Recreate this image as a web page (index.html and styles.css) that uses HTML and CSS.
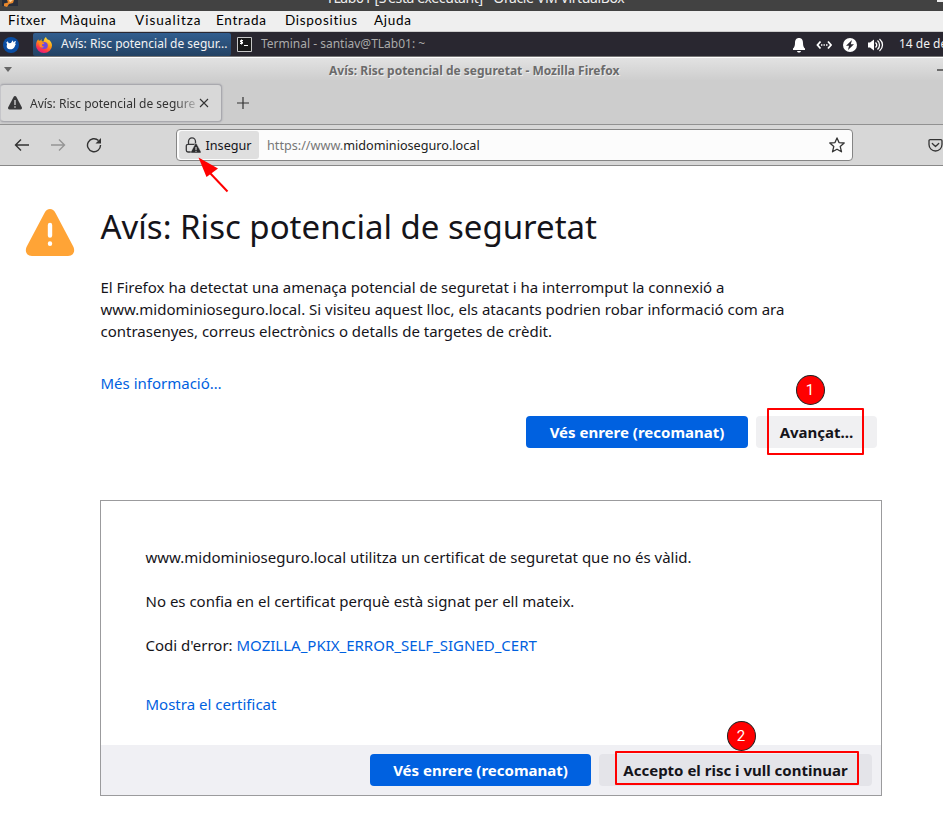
FILE: index.html
```html
<!DOCTYPE html>
<html lang="ca">
<head>
<meta charset="utf-8">
<title>Avís: Risc potencial de seguretat</title>
<link rel="stylesheet" href="styles.css">
</head>
<body>
<header class="host-title">
  <svg class="host-icon" width="24" height="9" viewBox="0 0 24 9"><path fill="#292e3a" d="M2 0h16v6H2z"/><path fill="#e9882c" d="M7 0h7l-1 3-4 1-2 3-3-1V3.500l4-1z"/><path fill="#ffd39a" d="M9 0h4l-3 2.500z"/></svg>
  <span>TLab01 [S'està executant] - Oracle VM VirtualBox</span>
  <i class="host-min"></i>
</header>
<nav class="host-menu"><span>Fitxer</span><span>Màquina</span><span>Visualitza</span><span>Entrada</span><span>Dispositius</span><span>Ajuda</span></nav>

<div class="panel">
  <svg class="whisker" width="16" height="16" viewBox="0 0 16 16"><circle cx="8" cy="8" r="8" fill="#0a4da2"/><path fill="#fff" d="M2.500 4.500l1.500 1.300L4.500 4l1.300 2.200L8 6l1.500-2.500.8.400-.3 1.600L12.300 4l.7.700-1.300 1.800 1.300.2c-.7 1-.9 2-1.500 3.200-.9 1.700-2.500 2.600-4.700 2.400-2-.2-3.300-1.500-3.100-3.300.1-.9.500-1.500.2-2.300z"/></svg>
  <div class="task active">
    <svg width="16" height="16" viewBox="0 0 16 16">
      <defs><linearGradient id="fox" x1=".8" y1="0" x2=".3" y2="1"><stop offset="0" stop-color="#fff04a"/><stop offset=".45" stop-color="#ff980e"/><stop offset=".75" stop-color="#ff3b47"/><stop offset="1" stop-color="#e31587"/></linearGradient></defs>
      <path fill="url(#fox)" d="M2.300 2.200l.5 1.500 1.700-.1L5.600 2v2.200l2 .3C8 2.600 8.600.9 10 0c.2 1.600 1.500 2.300 2.400 3.300L12.700 2.500C15 4.500 16 6.500 16 8.500a8 7.500 0 0 1-16 0C0 5.700.9 3.600 2.300 2.200z"/><circle cx="8.300" cy="8.500" r="3.500" fill="#7048de"/><path fill="#ff8b22" d="M3 6l3-.8 2.500.8-.8 1-1.700.3.200 1.700 2 .8-2 .9-2.400-1z"/></svg>
    <span>Avís: Risc potencial de segur...</span>
  </div>
  <div class="task terminal">
    <svg width="15" height="15" viewBox="0 0 15 15"><path fill="#171717" stroke="#c7c7c7" d="M.5.5h14v14H.500z"/><path fill="none" stroke="#fff" d="M6 3.500H3.500v1.500H5.500V6.500H3M4.500 2.500v5M7 8.500h4"/></svg>
    <span>Terminal - santiav@TLab01: ~</span>
  </div>
  <div class="tray">
    <svg width="14" height="16" viewBox="0 0 14 16"><path fill="#fff" d="M7 1c3 0 4 2.200 4 5 0 3.300.8 4.500 2 5.500v1.500H1v-1.500c1.200-1 2-2.200 2-5.500 0-2.800 1-5 4-5zM5 14h4c-.3 1-1 1.500-2 1.500S5.300 15 5 14z"/></svg>
    <svg width="16" height="16" viewBox="0 0 16 16"><path fill="none" stroke="#fff" stroke-width="1.800" d="M4.500 4.500L1.500 8l3 3.500M12 4.500L15 8l-3 3.500"/><path fill="#fff" d="M5 7.300h1.400v1.400H5zM7.500 7.300h1.400v1.400H7.500zM10 7.300h1.500v1.400H10z"/></svg>
    <svg width="16" height="16" viewBox="0 0 16 16"><circle cx="8" cy="8" r="7" fill="#fff"/><path fill="#292730" d="M10 3L4 8.800h3L6 13l6-5.800H8.800z"/></svg>
    <svg width="16" height="16" viewBox="0 0 16 16"><path fill="#fff" d="M0 5.500h2L6 2.500v11L2 10.500H0z"/><path fill="none" stroke="#fff" stroke-width="1.300" d="M7.500 5.500c1.500 1.500 1.500 3.500 0 5M9.500 3.500c2.700 2.500 2.700 6.500 0 9M11.500 2c4 3.500 4 8.500 0 12"/></svg>
    <span>14 de de</span>
  </div>
</div>

<div class="wm-title"><i class="wm-menu"></i><b>Avís: Risc potencial de seguretat - Mozilla Firefox</b><i class="wm-min"></i></div>

<div class="tabs">
  <div class="tab">
    <svg width="16" height="16" viewBox="0 0 16 16"><path fill="#38383a" d="M6.700 1.800c.6-1 2-1 2.600 0l5.500 10.500c.6 1.200-.1 2.200-1.300 2.200h-11c-1.200 0-1.900-1-1.300-2.200z"/><path stroke="#d7d7d7" stroke-width="1.300" d="M8 5v5M8 11.300v1.500"/></svg>
    <span class="tab-label">Avís: Risc potencial de seguretat</span>
    <svg class="close" width="10" height="10" viewBox="0 0 10 10"><path fill="none" stroke="#333" stroke-width="1.100" d="M1 1l8 8M9 1L1 9"/></svg>
  </div>
  <svg width="12" height="12" viewBox="0 0 12 12"><path fill="none" stroke="#333" stroke-width="1.200" d="M6 0v12M0 6h12"/></svg>
</div>

<div class="toolbar">
  <svg class="nav-back" width="16" height="16" viewBox="0 0 16 16"><path class="line" d="M15 8H1.500M7 2.500L1.500 8 7 13.500"/></svg>
  <svg class="nav-next" width="16" height="16" viewBox="0 0 16 16"><path class="line" d="M1 8h13.500M9 2.500L14.500 8 9 13.500"/></svg>
  <svg class="nav-load" width="16" height="16" viewBox="0 0 16 16"><path class="line" d="M14.500 8A6.500 6.500 0 1 1 12.500 3.500"/><path fill="#333" d="M15 1v5.500H9.500z"/></svg>
  <div class="urlbar">
    <div class="identity">
      <svg width="16" height="16" viewBox="0 0 16 16"><path fill="none" stroke="#38383a" stroke-width="1.300" d="M3.500 7V4.500a3.500 3.700 0 0 1 7 0V7M7 15H3a1.700 1.700 0 0 1-1.700-1.700V9A1.700 1.700 0 0 1 3 7.300h8"/><path fill="#2c2c2e" stroke="#dfdfdf" stroke-width=".6" d="M10 7c.4-.8 1.500-.8 1.900 0l4 7.500c.3.700 0 1.600-.7 1.600H6.700c-.7 0-1-.9-.7-1.600z"/><path stroke="#eee" d="M11 10v3M11 13.800v1"/></svg>
      <span>Insegur</span>
    </div>
    <span class="address">https://www.<em>midominioseguro.local</em></span>
    <svg class="star" width="16" height="16" viewBox="0 0 16 16"><path fill="none" stroke="#333" stroke-width="1.300" stroke-linejoin="round" d="M8 .9l2 4.700 5.200.4-4 3.400 1.300 5.400L8 12.200l-4.500 2.600 1.300-5.400L.8 6 6 5.600z"/></svg>
  </div>
  <svg class="pocket" width="15" height="15" viewBox="0 0 15 15"><path fill="none" stroke="#333" stroke-width="1.300" stroke-linejoin="round" stroke-linecap="round" d="M2.200 1.600h10.600c.7 0 1.200.5 1.200 1.200v3.700a6.500 6.500 0 0 1-13 0V2.800c0-.7.5-1.200 1.200-1.200zM4.300 5.500l3.200 3 3.200-3"/></svg>
</div>

<main class="page">
  <div class="heading">
    <svg width="50" height="48" viewBox="0 0 50 48"><path fill="#ffa436" d="M19.500 4c2.400-5.300 8.600-5.300 11 0l18 34c2 5-.7 9-5.500 9H7c-4.800 0-7.500-4-5.500-9z"/><path stroke="#fff" stroke-width="4.400" stroke-linecap="round" d="M25 16v10.500M25 34.500v.3"/></svg>
    <h1>Avís: Risc potencial de seguretat</h1>
  </div>
  <p class="intro">El Firefox ha detectat una amenaça potencial de seguretat i ha interromput la connexió a<br>www.midominioseguro.local. Si visiteu aquest lloc, els atacants podrien robar informació com ara<br>contrasenyes, correus electrònics o detalls de targetes de crèdit.</p>
  <a class="learn">Més informació…</a>
  <div class="actions">
    <button class="primary">Vés enrere (recomanat)</button>
    <button class="advanced">Avançat…</button>
  </div>
  <section class="details">
    <div class="details-body">
      <p>www.midominioseguro.local utilitza un certificat de seguretat que no és vàlid.</p>
      <p>No es confia en el certificat perquè està signat per ell mateix.</p>
      <p>Codi d'error: <a>MOZILLA_PKIX_ERROR_SELF_SIGNED_CERT</a></p>
      <a class="cert">Mostra el certificat</a>
    </div>
    <div class="details-actions">
      <button class="primary">Vés enrere (recomanat)</button>
      <button class="accept">Accepto el risc i vull continuar</button>
    </div>
  </section>
</main>

<svg class="arrow" width="34" height="38" viewBox="0 0 34 38"><path stroke="#f00" stroke-width="2" d="M12 16l17.500 18.500"/><path fill="#f00" d="M.500.500L20 11.500 8.500 20z"/></svg>
<i class="mark mark-one"></i><b class="badge badge-one">1</b>
<i class="mark mark-two"></i><b class="badge badge-two">2</b>
</body>
</html>
```
FILE: styles.css
```css
* { box-sizing: border-box; }
body { margin: 0; width: 943px; height: 836px; overflow: hidden; position: relative; background: #fff; color: #15141a; font-family: "Noto Sans", sans-serif; font-size: 15px; }
svg { display: block; flex: none; }
span, b, h1, p, button { white-space: nowrap; }

.host-title { display: flex; height: 11px; overflow: hidden; background: #424242; color: #eee; font: 14px/14px "Noto Sans", sans-serif; }
.host-icon { width: 24px; margin-right: 302px; }
.host-title span { width: 299px; margin-top: -9px; letter-spacing: -.38px; }
.host-min { width: 6px; height: 2px; margin-left: 312px; background: #eee; }
.host-menu { display: grid; grid-template-columns: 52px 75px 81px 69px 89px 60px; height: 21px; padding-left: 8px; background: #efefef; border-bottom: 1px solid #ccc; color: #000; font: 13.5px/19px Lato, sans-serif; letter-spacing: .7px; }
.host-menu span:nth-child(3) { letter-spacing: 1px; }

.panel { display: flex; align-items: center; height: 25px; background: #292730; color: #f3f3f3; font-size: 12px; }
.whisker { margin: 0 14px 0 3px; }
.task { display: flex; align-items: center; height: 23px; }
.task.active { width: 198px; padding-left: 3px; background: linear-gradient(#315e8f, #244263); border-radius: 2px; }
.task span, .tray span { margin: -3px 0 0 9px; }
.task.terminal { padding-left: 6px; color: #aaa; }
.tray { display: flex; align-items: center; margin-left: auto; width: 151px; flex: none; gap: 10px; }
.tray span { margin-left: 5px; }

.wm-title { display: flex; align-items: center; height: 23px; padding-top: 1px; border-top: 1px solid #fff; box-shadow: 0 -1px #777; background: linear-gradient(#e2e2e2, #cecece); color: #6b6b6b; font-size: 12px; text-shadow: 1px 1px #eee; }
.wm-menu { margin-left: 4px; border: 4px solid transparent; border-top: 5px solid #666; border-bottom: 0; }
.wm-title b { width: 291px; margin: 2px 0 0 317px; }
.wm-min { width: 6px; height: 2px; margin-left: auto; background: #6b6b6b; }
.tabs { display: flex; align-items: center; height: 45px; padding-top: 2px; border-bottom: 1px solid #919191; background: #cdcdcd; font-size: 12px; color: #333; }
.tab { display: flex; align-items: center; width: 222px; height: 38px; margin-right: 15px; padding: 0 12px 0 7px; background: #d8d8d8; border: 1px solid #a9a9ae; border-left-color: #c5c5c9; border-radius: 4px; box-shadow: 0 0 2px #9999a3; }
.tab svg:first-child { margin-left: -1px; }
.tab-label { width: 169px; margin-left: 7px; overflow: hidden; -webkit-mask-image: linear-gradient(90deg, #000 145px, transparent 172px); mask-image: linear-gradient(90deg, #000 145px, transparent 172px); }
.close { margin-left: 4px; }

.toolbar { display: flex; align-items: center; height: 41px; border-bottom: 1px solid #888; background: #d7d7d7; }
.line { fill: none; stroke: #333; stroke-width: 1.4; }
.nav-back { margin-left: 14px; }
.nav-next { margin-left: 20px; opacity: .4; }
.nav-load { margin-left: 20px; }
.urlbar { display: flex; align-items: center; width: 677px; height: 32px; margin-left: 74px; border: 1px solid #858585; border-radius: 4px; background: #fcfcfc; font-size: 12.65px; }
.identity { display: flex; align-items: center; width: 80px; height: 28px; margin-left: 2px; padding-left: 6px; border-radius: 3px; background: #dfdfdf; }
.identity span { margin-left: 4.5px; }
.address { margin-left: 8px; color: #777; }
.address em { color: #222; font-style: normal; }
.star { margin: 0 7px 0 auto; }
.pocket { margin-left: 75px; }

.page { padding-left: 100.5px; line-height: 22px; }
.heading { display: flex; align-items: center; height: 70px; margin: 27px 0 13px -76px; }
.heading svg { margin-top: 10px; }
.heading h1 { margin: -3px 0 0 26px; font-size: 33px; line-height: 44px; font-weight: 400; }
.intro { margin: 0; }
a { color: #0061e0; }
.learn { display: block; margin-top: 30px; }
.actions, .details-actions { display: flex; gap: 8px; justify-content: flex-end; }
.actions { width: 776.5px; margin-top: 22px; }
button { height: 32px; border: 0; border-radius: 4px; padding: 0; color: #15141a; font: 700 15px/32px "Noto Sans", sans-serif; }
.primary { width: 222px; color: #fff; background: #0061e0; }
.advanced { width: 121px; background: #f0f0f2; }
.details { width: 782px; height: 296px; margin: 52px 0 0 -.5px; border: 1px solid #9b9b9d; }
.details-body { height: 244px; padding: 45px 0 0 44.5px; }
.details p { margin: 0 0 22px; }
.details .cert { display: block; margin-top: 37px; }
.details-actions { height: 50px; align-items: center; padding-right: 9px; background: #f0f0f4; }
.details-actions .primary { width: 221px; }
.accept { width: 273px; background: #e4e4e9; }

.arrow { position: absolute; left: 198px; top: 157px; }
.mark { position: absolute; border: 2px solid #f00; border-radius: 1px; }
.mark-one { left: 767px; top: 408px; width: 97px; height: 47px; }
.mark-two { left: 615px; top: 751px; width: 244px; height: 34px; }
.badge { position: absolute; width: 29px; height: 30px; border: 1px solid #222; border-radius: 50%; background: #f00; color: #fff; text-align: center; font: 15px/29px Roboto, sans-serif; }
.badge-one { left: 795.5px; top: 375px; }
.badge-two { left: 726.5px; top: 721px; }
```
